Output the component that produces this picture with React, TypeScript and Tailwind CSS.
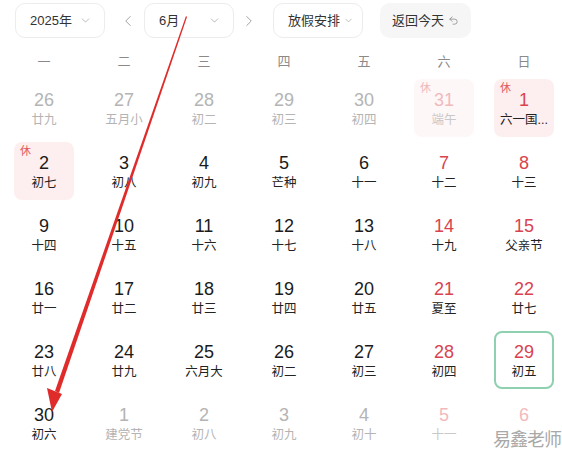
import { ChevronDown, ChevronLeft, ChevronRight, Undo2 } from "lucide-react";

type Day = {
  n: string;
  l: string;
  t?: "grey" | "red" | "fadedRed";
  holiday?: "on" | "faded";
  lunarDark?: boolean;
  today?: boolean;
};

const weeks: Day[][] = [
  [
    { n: "26", l: "廿九", t: "grey" },
    { n: "27", l: "五月小", t: "grey" },
    { n: "28", l: "初二", t: "grey" },
    { n: "29", l: "初三", t: "grey" },
    { n: "30", l: "初四", t: "grey" },
    { n: "31", l: "端午", t: "fadedRed", holiday: "faded" },
    { n: "1", l: "六一国...", t: "red", holiday: "on", lunarDark: true },
  ],
  [
    { n: "2", l: "初七", holiday: "on" },
    { n: "3", l: "初八" },
    { n: "4", l: "初九" },
    { n: "5", l: "芒种" },
    { n: "6", l: "十一" },
    { n: "7", l: "十二", t: "red" },
    { n: "8", l: "十三", t: "red" },
  ],
  [
    { n: "9", l: "十四" },
    { n: "10", l: "十五" },
    { n: "11", l: "十六" },
    { n: "12", l: "十七" },
    { n: "13", l: "十八" },
    { n: "14", l: "十九", t: "red" },
    { n: "15", l: "父亲节", t: "red" },
  ],
  [
    { n: "16", l: "廿一" },
    { n: "17", l: "廿二" },
    { n: "18", l: "廿三" },
    { n: "19", l: "廿四" },
    { n: "20", l: "廿五" },
    { n: "21", l: "夏至", t: "red" },
    { n: "22", l: "廿七", t: "red" },
  ],
  [
    { n: "23", l: "廿八" },
    { n: "24", l: "廿九" },
    { n: "25", l: "六月大" },
    { n: "26", l: "初二" },
    { n: "27", l: "初三" },
    { n: "28", l: "初四", t: "red" },
    { n: "29", l: "初五", t: "red", today: true },
  ],
  [
    { n: "30", l: "初六" },
    { n: "1", l: "建党节", t: "grey" },
    { n: "2", l: "初八", t: "grey" },
    { n: "3", l: "初九", t: "grey" },
    { n: "4", l: "初十", t: "grey" },
    { n: "5", l: "十一", t: "fadedRed" },
    { n: "6", l: "十二", t: "fadedRed" },
  ],
];

function DayCell({ d }: { d: Day }) {
  const numColor =
    d.t === "grey"
      ? "text-[#b4b4b4]"
      : d.t === "red"
      ? "text-[#d8434e]"
      : d.t === "fadedRed"
      ? "text-[#f2b9bd]"
      : "text-[#1b1b1b]";
  const lunarColor = d.lunarDark
    ? "text-[#222]"
    : d.t === "grey"
    ? "text-[#b4b4b4]"
    : d.t === "fadedRed"
    ? "text-[#c8c8c8]"
    : "text-[#222]";
  const bg =
    d.holiday === "on"
      ? "bg-[#fdefef]"
      : d.holiday === "faded"
      ? "bg-[#fef7f7]"
      : "";
  const border = d.today ? "border-2 border-[#8fd0b0]" : "";

  return (
    <div className="flex h-[63px] items-start justify-center">
      <div className={`relative flex h-[58px] w-[60px] flex-col items-center justify-center rounded-lg ${bg} ${border}`}>
        {d.holiday && (
          <span
            className={`absolute left-[6px] top-[3px] text-[11px] leading-[12px] ${
              d.holiday === "on" ? "text-[#e05a5a]" : "text-[#f0b8b8]"
            }`}
          >
            休
          </span>
        )}
        <div className={`mt-[2px] text-[18px] leading-[20px] ${numColor}`}>{d.n}</div>
        <div className={`mt-[1px] text-[12.5px] leading-[18px] ${lunarColor}`}>{d.l}</div>
      </div>
    </div>
  );
}

function Dropdown({ label }: { label: string }) {
  return (
    <div className="flex h-[35px] w-[90px] items-center rounded-[10px] border border-[#ececec] bg-white pl-[14px] pr-[12px]">
      <span className="text-[13px] text-[#333]">{label}</span>
      <ChevronDown className="ml-auto text-[#a0a0a0]" size={13} strokeWidth={1.3} />
    </div>
  );
}

export default function App() {
  return (
    <div
      className="relative h-[461px] w-[562px] overflow-hidden bg-white"
      style={{ fontFamily: '"Liberation Sans", "Noto Sans CJK SC", sans-serif' }}
    >
      <div className="flex items-center pl-[15px] pt-[3px]">
        <Dropdown label="2025年" />
        <ChevronLeft className="ml-[14px] mr-[7px] text-[#999]" size={18} strokeWidth={1.2} />
        <Dropdown label="6月" />
        <ChevronRight className="ml-[6px] mr-[15px] text-[#999]" size={18} strokeWidth={1.2} />
        <div className="flex h-[35px] w-[90px] items-center rounded-[10px] border border-[#ececec] pl-[14px]">
          <span className="text-[13px] text-[#333]">放假安排</span>
          <ChevronDown className="ml-[3px] text-[#a0a0a0]" size={11} strokeWidth={1.4} />
        </div>
        <div className="ml-[17px] flex h-[35px] w-[91px] items-center rounded-[10px] bg-[#f6f6f6] pl-[12px]">
          <span className="text-[13px] text-[#333]">返回今天</span>
          <Undo2 className="ml-[4px] text-[#888]" size={11} strokeWidth={1.7} />
        </div>
      </div>

      <div className="ml-[4px] mt-[14px] grid w-[560px] grid-cols-[repeat(7,80px)]">
        {["一", "二", "三", "四", "五", "六", "日"].map((w) => (
          <div key={w} className="flex h-[20px] items-center justify-center text-[13px] text-[#8a8a8a]">
            {w}
          </div>
        ))}
      </div>

      <div className="ml-[4px] mt-[7px] grid w-[560px] grid-cols-[repeat(7,80px)]">
        {weeks.flat().map((d, i) => (
          <DayCell key={i} d={d} />
        ))}
      </div>

      <div className="absolute left-[492px] top-[428px] bg-white/85 px-[1px] text-[18px] leading-[24px] tracking-[-1px] text-[#a8a8a8]">
        易鑫老师
      </div>

      <svg className="pointer-events-none absolute left-0 top-0" width="562" height="461">
        <polygon points="186,16 187,17 59,393 55,391" fill="#e02b2b" />
        <polygon points="52,412 47,388 62,394" fill="#e02b2b" />
      </svg>
    </div>
  );
}
